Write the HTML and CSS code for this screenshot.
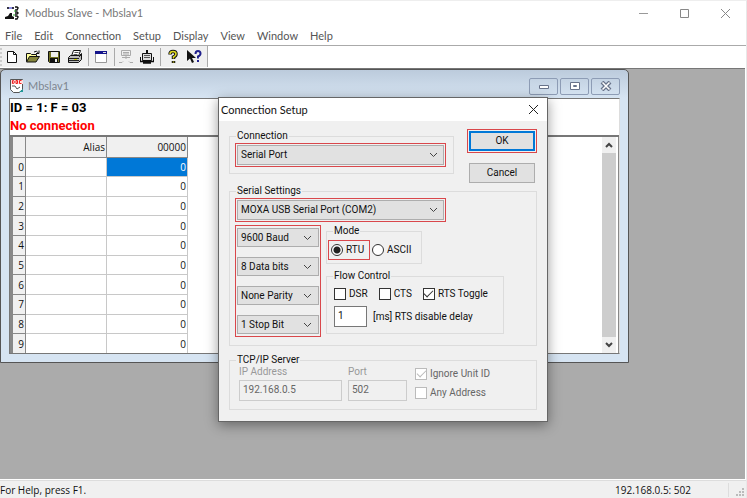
FILE: index.html
```html
<!DOCTYPE html>
<html lang="en">
<head>
	<meta charset="UTF-8">
	<title>Modbus Slave - Mbslav1</title>
	<link rel="stylesheet" href="styles.css">
</head>
<body>
	<div class="app">
		<header class="titlebar">
			<svg class="app-icon" width="14" height="14" viewBox="0 0 14 14">
				<path d="M2 1h2v2H2zM7 1h2v2H7z" fill="#334"/>
				<path d="M4 2h3" stroke="#22c" />
				<path d="M10 1h2l1 1-1 2h-2M10 6h2l1 1-1 1h-2M10 10h2l1 1-1 2h-2" fill="none" stroke="#111" stroke-width="1.5"/>
				<path d="M9 5h2M8 9h2" stroke="#2a2"/>
				<path d="M0 11l3-1 2-3h2v3l2 1v2H0z" fill="#111"/>
			</svg>
			<h1>Modbus Slave - Mbslav1</h1>
			<div class="window-buttons">
				<button aria-label="Minimize"><svg width="11" height="11"><path d="M1 5.500h9" stroke="#999"/></svg></button>
				<button aria-label="Maximize"><svg width="11" height="11"><path d="M1.500 1.500h8v8h-8z" fill="none" stroke="#888"/></svg></button>
				<button aria-label="Close"><svg width="11" height="11"><path d="M1 1l9 9M10 1l-9 9" stroke="#888"/></svg></button>
			</div>
		</header>

		<nav class="menu">
			<button>File</button>
			<button>Edit</button>
			<button>Connection</button>
			<button>Setup</button>
			<button>Display</button>
			<button>View</button>
			<button>Window</button>
			<button>Help</button>
		</nav>

		<div class="toolbar-row">
			<div class="toolbar">
				<span class="grip"></span>
				<button aria-label="New"><svg width="16" height="16"><path d="M3.500 2.500h6l3 3v8h-9z" fill="#fff" stroke="#111"/><path d="M9.500 2.500v3h3" fill="none" stroke="#111"/></svg></button>
				<button aria-label="Open"><svg width="16" height="16"><path d="M1.500 12.500v-8h4l1 1h5v2" fill="#ffff9c" stroke="#111"/><path d="M1.500 13l3-5.500h10l-3.500 5.500z" fill="#85853a" stroke="#111"/><path d="M9 3q2.500-2 4.500 1M14 1.500v3h-3" fill="none" stroke="#111"/></svg></button>
				<button aria-label="Save"><svg width="16" height="16"><path d="M2.500 2.500h11v11h-10l-1-1z" fill="#707020" stroke="#111"/><path d="M5 3h7v5H5z" fill="#eee"/><path d="M4 9h8v5H4z" fill="#111"/><path d="M9 10h2v3H9z" fill="#eee"/></svg></button>
				<button aria-label="Print"><svg width="16" height="16"><path d="M4.500 7l2-5.500h7l-2 5.500" fill="#fff" stroke="#111"/><path d="M7.500 3.500h4M6.500 5.500h4" stroke="#555"/><path d="M1.500 8.500l2-2h9l2-2v6l-3 3h-10z" fill="#bbb" stroke="#111"/><path d="M2 9.500h10M2 11.500h10M12 8l2-2" stroke="#222"/><path d="M7 10.500h3" stroke="#cc0"/></svg></button>
				<span class="divider"></span>
				<button aria-label="New window"><svg width="16" height="16"><path d="M2.500 2.500h11v11h-11z" fill="#fff" stroke="#999"/><path d="M2 2h12v3H2z" fill="#15158c"/><path d="M10 3.500h3" stroke="#ddd"/></svg></button>
				<span class="divider"></span>
				<button aria-label="Connect"><svg width="16" height="16" fill="none" stroke="#aaa"><path d="M3.500 1.500h9v5h-9zM5 3.500h6M5 5h6M8 7v3M4 8.500h8"/><path d="M1 13.500h3l1-1M15 13.500h-3l-1-1"/></svg></button>
				<button aria-label="Disconnect"><svg width="16" height="16"><path d="M8 1v3" stroke="#111" stroke-width="2"/><path d="M3.500 4.500h9v7h-9z" fill="#ddd" stroke="#111"/><path d="M5 6.500h6M5 8.500h6" stroke="#555"/><path d="M1.500 8v5M14.500 8v5" stroke="#111"/><path d="M1 12.500h14M4 14h8" stroke="#111" stroke-width="1.500"/></svg></button>
				<span class="divider"></span>
				<button aria-label="About"><svg width="16" height="16"><path d="M5 5.500q0-3 3-3t3 2.500q0 2-2.500 3v2M8.500 12v2" fill="none" stroke="#111" stroke-width="3.500"/><path d="M5 5q0-2.500 3-2.500t3 2.500q0 2-2.500 3v1.500M8.500 12.500v1" fill="none" stroke="#e2dc20" stroke-width="1.500"/></svg></button>
				<button aria-label="Context help"><svg width="16" height="16"><path d="M1 1v11l3-2.500 2 4.500 2-1-2-4h4z" fill="#111"/><path d="M9.500 5q0-3 2.500-3t2.500 2.500q0 2-2.500 3v2M12 11v2" fill="none" stroke="#20208c" stroke-width="2"/></svg></button>
			</div>
		</div>

		<main class="desktop">
			<section class="child">
				<header class="child-title">
					<svg width="16" height="16"><path d="M1.500 1.500h12v10l-3 3h-6l-3-3z" fill="#fff" stroke="#555"/><path d="M2 2h12v4H2z" fill="#fdd"/><path d="M3.500 2.500v3h1l1-1.500-1-1.500zM7 2.500h1.500v3H7zM12.500 2.500h-2v3h2" fill="none" stroke="#e22"/><path d="M3 8h3l2 3 3-2" fill="none" stroke="#555"/><path d="M10 14l4-3v3z" fill="#299"/></svg>
					<h2>Mbslav1</h2>
					<div class="child-buttons">
						<button aria-label="Minimize"><svg width="12" height="10"><path d="M1.500 4.500h9v3h-9z" fill="#fff" stroke="#68738a"/></svg></button>
						<button aria-label="Maximize"><svg width="12" height="10"><path d="M1.500 1.500h9v7h-9z" fill="#fff" stroke="#68738a"/><path d="M4.500 4.500h3v1h-3z" fill="none" stroke="#68738a"/></svg></button>
						<button aria-label="Close"><svg width="12" height="10"><path d="M2 1l8 8M10 1l-8 8" stroke="#68738a" stroke-width="4"/><path d="M2.500 1.500l7 7M9.500 1.500l-7 7" stroke="#fff" stroke-width="1.500"/></svg></button>
					</div>
				</header>
				<div class="child-body">
					<div class="info">
						<p>ID = 1: F = 03</p>
						<p class="error">No connection</p>
					</div>
					<div class="grid-area">
						<div class="grid-scroll">
							<table>
								<thead>
									<tr><th class="num"></th><th>Alias</th><th>00000</th></tr>
								</thead>
								<tbody>
									<tr><th class="num">0</th><td></td><td class="selected">0</td></tr>
									<tr><th class="num">1</th><td></td><td>0</td></tr>
									<tr><th class="num">2</th><td></td><td>0</td></tr>
									<tr><th class="num">3</th><td></td><td>0</td></tr>
									<tr><th class="num">4</th><td></td><td>0</td></tr>
									<tr><th class="num">5</th><td></td><td>0</td></tr>
									<tr><th class="num">6</th><td></td><td>0</td></tr>
									<tr><th class="num">7</th><td></td><td>0</td></tr>
									<tr><th class="num">8</th><td></td><td>0</td></tr>
									<tr><th class="num">9</th><td></td><td>0</td></tr>
								</tbody>
							</table>
						</div>
						<div class="scrollbar">
							<button aria-label="Scroll up"><svg width="8" height="8"><path d="M1 6l3-3 3 3" fill="none" stroke="#444" stroke-width="2"/></svg></button>
							<span class="thumb"></span>
							<button aria-label="Scroll down"><svg width="8" height="8"><path d="M1 2l3 3 3-3" fill="none" stroke="#444" stroke-width="2"/></svg></button>
						</div>
					</div>
				</div>
			</section>

			<form class="dialog">
				<header class="dialog-title">
					<h2>Connection Setup</h2>
					<button type="button" aria-label="Close"><svg width="11" height="11"><path d="M1 1l9 9M10 1l-9 9" stroke="#222"/></svg></button>
				</header>
				<div class="dialog-body">
					<div class="top-row">
						<fieldset class="connection">
							<legend>Connection</legend>
							<div class="mark combo">
								<select aria-label="Connection"><option>Serial Port</option></select>
								<svg width="9" height="6"><path d="M1 1l3.500 3.500L8 1" fill="none" stroke="#444"/></svg>
							</div>
						</fieldset>
						<div class="actions">
							<div class="mark"><button type="button" class="btn default">OK</button></div>
							<button type="button" class="btn cancel">Cancel</button>
						</div>
					</div>

					<fieldset class="serial">
						<legend>Serial Settings</legend>
						<div class="mark combo port">
							<select aria-label="Serial port"><option>MOXA USB Serial Port (COM2)</option></select>
							<svg width="9" height="6"><path d="M1 1l3.500 3.500L8 1" fill="none" stroke="#444"/></svg>
						</div>
						<div class="columns">
							<div class="mark stack">
								<div class="combo">
									<select aria-label="Baud rate"><option>9600 Baud</option></select>
									<svg width="9" height="6"><path d="M1 1l3.500 3.500L8 1" fill="none" stroke="#444"/></svg>
								</div>
								<div class="combo">
									<select aria-label="Data bits"><option>8 Data bits</option></select>
									<svg width="9" height="6"><path d="M1 1l3.500 3.500L8 1" fill="none" stroke="#444"/></svg>
								</div>
								<div class="combo">
									<select aria-label="Parity"><option>None Parity</option></select>
									<svg width="9" height="6"><path d="M1 1l3.500 3.500L8 1" fill="none" stroke="#444"/></svg>
								</div>
								<div class="combo">
									<select aria-label="Stop bits"><option>1 Stop Bit</option></select>
									<svg width="9" height="6"><path d="M1 1l3.500 3.500L8 1" fill="none" stroke="#444"/></svg>
								</div>
							</div>
							<div class="modes">
								<fieldset class="mode">
									<legend>Mode</legend>
									<div class="line">
										<label class="mark"><input type="radio" name="mode" checked>RTU</label>
										<label><input type="radio" name="mode">ASCII</label>
									</div>
								</fieldset>
								<fieldset class="flow">
									<legend>Flow Control</legend>
									<div class="line checks">
										<label><input type="checkbox">DSR</label>
										<label><input type="checkbox">CTS</label>
										<label><input type="checkbox" checked>RTS Toggle</label>
									</div>
									<div class="line delay">
										<input type="text" id="delay" value="1">
										<label for="delay">[ms] RTS disable delay</label>
									</div>
								</fieldset>
							</div>
						</div>
					</fieldset>

					<fieldset class="tcp">
						<legend>TCP/IP Server</legend>
						<div class="field ip">
							<label for="ip">IP Address</label>
							<input type="text" id="ip" value="192.168.0.5" disabled>
						</div>
						<div class="field tcp-port">
							<label for="port">Port</label>
							<input type="text" id="port" value="502" disabled>
						</div>
						<div class="options">
							<label><input type="checkbox" checked disabled>Ignore Unit ID</label>
							<label><input type="checkbox" disabled>Any Address</label>
						</div>
					</fieldset>
				</div>
			</form>
		</main>

		<footer class="statusbar">
			<span>For Help, press F1.</span>
			<span class="address">192.168.0.5: 502</span>
			<svg class="resize" width="10" height="10" fill="#bbb"><path d="M7 1h2v2H7zM4 4h2v2H4zM7 4h2v2H7zM1 7h2v2H1zM4 7h2v2H4zM7 7h2v2H7z"/></svg>
		</footer>
	</div>
</body>
</html>
```

FILE: styles.css
```css
* {
	box-sizing: border-box;
}

body {
	margin: 0;
	font-family: "Open Sans", "Noto Sans", sans-serif;
	font-size: 10px;
	line-height: 14px;
	color: #111;
}

h1, h2, p {
	margin: 0;
	font-size: 11px;
	font-weight: normal;
}

h1, h2, .menu {
	font-family: Lato, "Open Sans", sans-serif;
	font-size: 11px;
}

button {
	margin: 0;
	padding: 0;
	border: none;
	background: none;
	font: inherit;
	color: inherit;
}

svg {
	display: block;
}

.app {
	display: flex;
	flex-direction: column;
	height: 100vh;
	background-color: #fff;
	border-top: 1px solid #eee;
	border-right: 1px solid #e8e8e8;
}

/* title and menu */
.titlebar {
	display: flex;
	align-items: center;
	height: 24px;
	padding-left: 5px;
	color: #777;
}

.app-icon {
	margin-right: 6px;
}

.window-buttons {
	display: flex;
	margin-left: auto;
}

.window-buttons button {
	display: flex;
	justify-content: center;
	width: 41px;
}

.menu {
	display: flex;
	gap: 12px;
	height: 21px;
	padding: 1px 5px 0;
	border-bottom: 1px solid #aaa;
	color: #555;
}

/* toolbar */
.toolbar-row {
	height: 22px;
}

.toolbar {
	display: flex;
	align-items: center;
	width: 208px;
	height: 21px;
	background-color: #f0f0f0;
	border-right: 1px solid #aaa;
}

.toolbar button {
	width: 16px;
	margin-right: 5px;
}

.grip {
	width: 6px;
	height: 18px;
	border-left: 2px dotted #ccc;
}

.divider {
	width: 1px;
	height: 18px;
	margin-right: 4px;
	background-color: #aaa;
}

/* mdi area */
.desktop {
	position: relative;
	flex: 1;
	margin-right: 1px;
	overflow: hidden;
	background-color: #ababab;
	border-top: 1px solid #777;
}

.child {
	position: absolute;
	top: 0;
	left: 0;
	display: flex;
	flex-direction: column;
	width: 629px;
	height: 294px;
	padding: 0 8px 8px;
	background: linear-gradient(#bccbdc, #d6e4f2 28px);
	border: 1px solid #555;
	border-radius: 5px 5px 0 0;
}

.child-title {
	display: flex;
	align-items: center;
	height: 28px;
	padding-top: 4px;
	color: #7d858f;
}

.child-title h2 {
	margin-left: 3px;
}

.child-buttons {
	display: flex;
	gap: 2px;
	margin-left: auto;
}

.child-buttons button {
	display: flex;
	align-items: center;
	justify-content: center;
	width: 29px;
	height: 17px;
	border: 1px solid #8d9cb5;
	border-radius: 2px;
}

.child-body {
	display: flex;
	flex: 1;
	flex-direction: column;
	min-height: 0;
	background-color: #fff;
	border: 1px solid #777;
	border-right-color: #ddd;
}

.info {
	height: 38px;
	font-family: Roboto, sans-serif;
	border-bottom: 2px solid #777;
}

.info p {
	font-size: 13px;
	font-weight: bold;
	line-height: 18px;
	color: #000;
}

.info .error {
	color: #f00;
}

.grid-area {
	display: flex;
	flex: 1;
	justify-content: space-between;
	min-height: 0;
	padding-right: 2px;
	border-left: 2px solid #888;
	border-right: 1px solid #888;
}

.grid-scroll {
	overflow: hidden;
}

table {
	height: 217px;
	border-collapse: collapse;
	table-layout: fixed;
	width: 176px;
}

thead tr {
	height: 20px;
}

th, td {
	padding: 0 1px 0 0;
	font-weight: normal;
	text-align: right;
	border: 1px solid #c8c8c8;
	border-top: none;
}

td {
	background-color: #fff;
}

th {
	background-color: #f0f0f0;
	border-color: #888;
}

th.num {
	width: 13px;
}

td.selected {
	background-color: #0078d7;
	color: #fff;
}

.scrollbar {
	display: flex;
	flex-direction: column;
	width: 14px;
	background-color: #f0f0f0;
}

.scrollbar button {
	display: flex;
	align-items: center;
	justify-content: center;
	height: 16px;
}

.thumb {
	flex: 1;
	background-color: #cdcdcd;
}

/* connection dialog */
.dialog {
	position: absolute;
	top: 28px;
	left: 218px;
	width: 330px;
	background-color: #f0f0f0;
	border: 1px solid #666;
	box-shadow: 0 3px 12px rgba(0, 0, 0, 0.4);
	font-family: Roboto, sans-serif;
	line-height: 12px;
}

.dialog-title {
	display: flex;
	align-items: center;
	justify-content: space-between;
	height: 23px;
	padding: 0 8px 0 2px;
	background-color: #fff;
}

.dialog-body {
	padding: 8px 10px 11px;
}

.top-row {
	display: flex;
	justify-content: space-between;
	margin-bottom: 2px;
}

fieldset {
	min-width: 0;
	margin: 0;
	padding: 0 7px;
	border: 1px solid #dcdcdc;
}

legend {
	height: 12px;
	padding: 0 1px;
}

.mark {
	padding: 1px;
	border: 1px solid #d9474b;
}

.connection {
	width: 225px;
	height: 44px;
	margin-top: 1px;
	padding: 1px 7px 0 5px;
}

.combo {
	position: relative;
}

.combo svg {
	position: absolute;
	top: 50%;
	right: 7px;
	margin-top: -3px;
	pointer-events: none;
}

select {
	display: block;
	width: 100%;
	height: 20px;
	padding: 0 3px;
	appearance: none;
	background-color: #e1e1e1;
	border: 1px solid #adadad;
	border-radius: 0;
	font: inherit;
	color: inherit;
}

.actions {
	display: flex;
	flex-direction: column;
	gap: 10px;
	width: 70px;
}

.btn {
	display: block;
	width: 66px;
	height: 20px;
	background-color: #e1e1e1;
	border: 1px solid #adadad;
}

.btn.default {
	border: 2px solid #0078d7;
}

.btn.cancel {
	margin-left: 2px;
}

.serial {
	padding: 1px 7px 8px 5px;
}

.connection legend, .serial > legend {
	margin-left: 1px;
}

.port {
	width: 211px;
	margin-bottom: 3px;
}

.columns {
	display: flex;
	gap: 5px;
}

.stack {
	display: flex;
	flex-direction: column;
	gap: 10px;
	width: 86px;
	height: 112px;
	padding: 2px 1px;
}

.stack select {
	height: 19px;
}

.line {
	display: flex;
	align-items: center;
}

.line label, .options label {
	display: flex;
	align-items: center;
}

.mode {
	width: 96px;
	height: 39px;
	margin-bottom: 6px;
	padding: 3px 2px 0 1px;
}

.mode legend {
	margin-left: 5px;
}

.mode .line {
	gap: 2px;
}

.mode .mark {
	width: 42px;
	height: 20px;
	padding: 0 2px;
}

.flow {
	width: 178px;
	height: 64px;
}

.flow legend {
	margin-left: -1px;
}

.checks {
	gap: 11px;
	margin: 6px 0;
}

.delay {
	gap: 6px;
}

input[type="checkbox"], input[type="radio"] {
	width: 12px;
	height: 12px;
	margin: 0 3px 0 0;
	appearance: none;
	background-color: #fff;
	border: 1px solid #333;
}

input[type="radio"] {
	border-radius: 50%;
}

input[type="radio"]:checked {
	background-image: radial-gradient(#222 3px, transparent 4px);
}

/* tick */
input[type="checkbox"]:checked {
	display: grid;
	place-items: center;
}

input[type="checkbox"]:checked::before {
	content: "";
	width: 8px;
	height: 4px;
	margin-bottom: 3px;
	border: solid #333;
	border-width: 0 0 1px 1px;
	transform: rotate(-45deg);
}

input[type="checkbox"]:disabled, input[type="checkbox"]:disabled::before {
	border-color: #bbb;
}

input[type="text"] {
	width: 100%;
	height: 21px;
	padding: 0 3px 3px;
	background-color: #fff;
	border: 1px solid #777;
	font: inherit;
	color: inherit;
}

input[type="text"]:disabled {
	background-color: #f0f0f0;
	border-color: #ccc;
}

.delay input[type="text"] {
	width: 33px;
}

.tcp {
	display: flex;
	height: 56px;
	margin-top: 8px;
	padding-left: 9px;
	color: #666;
}

.tcp legend {
	margin-left: -3px;
	color: #111;
}

.field {
	margin-right: 6px;
}

.field label {
	display: block;
	height: 14px;
	color: #999;
}

.ip {
	width: 103px;
}

.tcp-port {
	width: 59px;
}

.options {
	display: flex;
	flex-direction: column;
	gap: 7px;
	padding: 2px;
}

/* status bar */
.statusbar {
	display: flex;
	align-items: center;
	height: 18px;
	margin-top: 1px;
	background-color: #f0f0f0;
	border-top: 1px solid #ddd;
}

.address {
	margin-left: auto;
	padding-right: 37px;
	border-right: 1px solid #ddd;
}

.resize {
	margin: 4px 1px 0 6px;
}
```
